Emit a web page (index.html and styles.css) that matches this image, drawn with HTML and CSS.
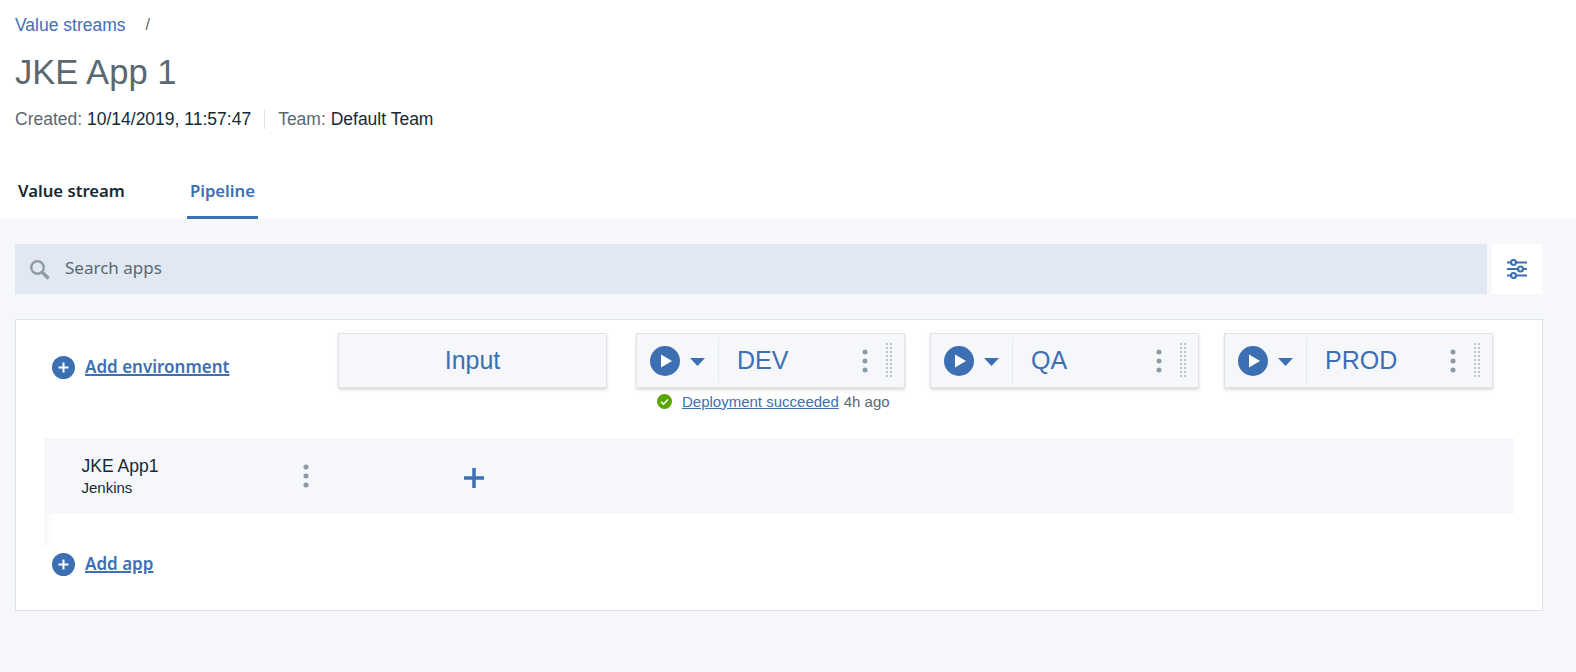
FILE: index.html
```html
<!DOCTYPE html>
<html lang="en">
<head>
<meta charset="utf-8">
<title>JKE App 1</title>
<link rel="stylesheet" href="styles.css">
</head>
<body>
<header class="head">
  <nav class="crumbs"><a class="crumb-link">Value streams</a><span class="crumb-sep">/</span></nav>
  <h1 class="title">JKE App 1</h1>
  <div class="meta">
    <span class="meta-item">Created: <span class="meta-val">10/14/2019, 11:57:47</span></span>
    <span class="meta-div"></span>
    <span class="meta-item">Team: <span class="meta-val">Default Team</span></span>
  </div>
  <div class="tabs">
    <div class="tab">Value stream</div>
    <div class="tab tab-active">Pipeline</div>
  </div>
</header>
<main class="body">
  <div class="toolbar">
    <div class="search">
      <svg class="search-icon" width="20" height="20" viewBox="0 0 20 20"><circle cx="7.500" cy="7.500" r="6.300" fill="none" stroke="#8c9ba5" stroke-width="2.400"/><path d="M12.500 12.500l6 6" stroke="#8c9ba5" stroke-width="3.600" fill="none"/></svg>
      <span class="search-text">Search apps</span>
    </div>
    <button class="filter">
      <svg width="20" height="20" viewBox="0 0 20 20"><g fill="none" stroke="#3d70b2" stroke-width="2.200"><path d="M0 3.500h20M0 10h20M0 16.500h20"/><circle cx="6.500" cy="3.500" r="2.500" fill="#fff"/><circle cx="13.500" cy="10" r="2.500" fill="#fff"/><circle cx="6.500" cy="16.500" r="2.500" fill="#fff"/></g></svg>
    </button>
  </div>
  <section class="panel">
    <div class="env-row">
      <a class="add add-env">
        <svg class="add-icon" width="23" height="23" viewBox="0 0 23 23"><circle cx="11.500" cy="11.500" r="11.500" fill="#3d70b2"/><path d="M11.500 6.500v10M6.500 11.500h10" stroke="#fff" stroke-width="2"/></svg>
        <span class="add-label">Add environment</span>
      </a>
      <div class="card card-input">Input</div>
      <div class="env env-dev">
        <div class="card">
          <div class="run">
            <svg width="30" height="30" viewBox="0 0 30 30"><circle cx="15" cy="15" r="15" fill="#3d70b2"/><path d="M11 8.500l11 6.500-11 6.500z" fill="#fff"/></svg>
            <svg class="caret" width="15" height="8" viewBox="0 0 15 8"><path d="M0 0h15l-7.500 8z" fill="#3d70b2"/></svg>
          </div>
          <span class="env-name">DEV</span>
          <svg class="kebab" width="6" height="24" viewBox="0 0 6 24"><g fill="#8c9ba5"><circle cx="3" cy="3" r="2.500"/><circle cx="3" cy="12" r="2.500"/><circle cx="3" cy="21" r="2.500"/></g></svg>
          <span class="grip"></span>
        </div>
        <div class="status">
          <svg width="15" height="15" viewBox="0 0 15 15"><circle cx="7.500" cy="7.500" r="7.500" fill="#5aa700"/><path d="M4 7.800l2.500 2.400L11 5.500" fill="none" stroke="#fff" stroke-width="1.500"/></svg>
          <a class="status-link">Deployment succeeded</a>
          <span class="status-time">4h ago</span>
        </div>
      </div>
      <div class="env">
        <div class="card">
          <div class="run">
            <svg width="30" height="30" viewBox="0 0 30 30"><circle cx="15" cy="15" r="15" fill="#3d70b2"/><path d="M11 8.500l11 6.500-11 6.500z" fill="#fff"/></svg>
            <svg class="caret" width="15" height="8" viewBox="0 0 15 8"><path d="M0 0h15l-7.500 8z" fill="#3d70b2"/></svg>
          </div>
          <span class="env-name">QA</span>
          <svg class="kebab" width="6" height="24" viewBox="0 0 6 24"><g fill="#8c9ba5"><circle cx="3" cy="3" r="2.500"/><circle cx="3" cy="12" r="2.500"/><circle cx="3" cy="21" r="2.500"/></g></svg>
          <span class="grip"></span>
        </div>
      </div>
      <div class="env">
        <div class="card">
          <div class="run">
            <svg width="30" height="30" viewBox="0 0 30 30"><circle cx="15" cy="15" r="15" fill="#3d70b2"/><path d="M11 8.500l11 6.500-11 6.500z" fill="#fff"/></svg>
            <svg class="caret" width="15" height="8" viewBox="0 0 15 8"><path d="M0 0h15l-7.500 8z" fill="#3d70b2"/></svg>
          </div>
          <span class="env-name">PROD</span>
          <svg class="kebab" width="6" height="24" viewBox="0 0 6 24"><g fill="#8c9ba5"><circle cx="3" cy="3" r="2.500"/><circle cx="3" cy="12" r="2.500"/><circle cx="3" cy="21" r="2.500"/></g></svg>
          <span class="grip"></span>
        </div>
      </div>
    </div>
    <div class="app-row">
      <div class="app-info">
        <div class="app-name">JKE App1</div>
        <div class="app-source">Jenkins</div>
      </div>
      <svg class="app-kebab" width="6" height="24" viewBox="0 0 6 24"><g fill="#8c9ba5"><circle cx="3" cy="3" r="2.500"/><circle cx="3" cy="12" r="2.500"/><circle cx="3" cy="21" r="2.500"/></g></svg>
      <svg class="app-plus" width="20" height="20" viewBox="0 0 20 20"><path d="M10 0v20M0 10h20" stroke="#3d70b2" stroke-width="3.500"/></svg>
    </div>
    <div class="app-fade"></div>
    <a class="add add-app">
      <svg class="add-icon" width="23" height="23" viewBox="0 0 23 23"><circle cx="11.500" cy="11.500" r="11.500" fill="#3d70b2"/><path d="M11.500 6.500v10M6.500 11.500h10" stroke="#fff" stroke-width="2"/></svg>
      <span class="add-label">Add app</span>
    </a>
  </section>
</main>
</body>
</html>
```
FILE: styles.css
```css
* { box-sizing: border-box; }
html, body { margin: 0; padding: 0; }
body {
  height: 672px;
  overflow: hidden;
  background: #f5f7fb;
  font-family: "Liberation Sans", Arial, sans-serif;
  color: #152935;
}
.head { background: #fff; height: 219px; padding: 15px 15px 0; }
.crumbs { display: flex; height: 20px; line-height: 20px; font-size: 17.500px; }
.crumb-link { color: #3d70b2; }
.crumb-sep { color: #5a6872; margin-left: 20px; font-size: 16px; }
.title { margin: 16px 0 0; font-size: 34.600px; line-height: 42px; font-weight: 400; color: #5a6872; }
.meta { display: flex; align-items: center; margin-top: 16px; height: 20px; font-size: 17.500px; color: #5a6872; }
.meta-val { color: #152935; }
.meta-div { width: 1px; height: 20px; background: #dfe3e6; margin: 0 13px; }
.tabs { display: flex; margin-top: 39px; height: 51px; }
.tab {
  font-family: "Noto Sans", sans-serif;
  font-weight: 600;
  font-size: 16.700px;
  line-height: 22px;
  padding: 12px 3px 0;
  color: #152935;
  margin-right: 59px;
}
.tab-active { color: #3d70b2; border-bottom: 3px solid #3d70b2; height: 51px; margin-right: 0; }
.body { padding: 25px 34px 0 15px; }
.toolbar { display: flex; gap: 5px; height: 50px; }
.search { flex: 1; background: #e1e8f2; display: flex; align-items: center; padding-left: 15px; }
.search-text { margin-left: 15px; font-size: 17px; line-height: 22px; margin-top: -3px; color: #5a6872; font-family: "Noto Sans", sans-serif; }
.search-icon { margin-top: 2px; }
.filter { width: 50px; height: 50px; border: 0; padding: 0; background: #fff; display: flex; align-items: center; justify-content: center; }
.panel { margin: 25px -1px 0 0; height: 292px; background: #fff; border: 1px solid #dfe3e6; position: relative; padding: 13px 0 0 28px; }
.env-row { display: flex; align-items: flex-start; height: 105px; }
.add { display: flex; align-items: center; color: #3d70b2; }
.add-icon { flex: none; }
.add-label {
  margin: -2px 0 0 10px;
  font-family: "Noto Sans", sans-serif;
  font-weight: 600;
  font-size: 17px;
  line-height: 23px;
  text-decoration: underline;
  text-decoration-thickness: 2px;
}
.add-env { width: 286px; margin: 23px 0 0 8px; }
.card {
  width: 269px;
  height: 55px;
  background: #f5f7fb;
  border: 1px solid #dfe3e6;
  box-shadow: 0 2px 3px rgba(0, 0, 0, .14);
  display: flex;
  align-items: center;
  position: relative;
  color: #3d70b2;
  font-size: 25px;
}
.card-input { justify-content: center; margin-right: 29px; }
.env { margin-right: 25px; }
.run { display: flex; align-items: center; height: 45px; width: 82px; padding-left: 13px; border-right: 1px solid #e6e9ee; flex: none; }
.caret { margin: 2px 0 0 10px; }
.env-name { margin-left: 18px; flex: 1; }
.kebab { margin-right: 16px; }
.grip {
  width: 8px;
  height: 36px;
  margin-right: 12px;
  background: conic-gradient(#bcc4ca 25%, transparent 0) 0 0 / 4px 4px;
}
.status { display: flex; align-items: center; margin: 5px 0 0 21px; height: 16px; font-size: 15px; color: #5a6872; }
.status-link { color: #3d70b2; text-decoration: underline; margin-left: 10px; }
.status-time { margin-left: 5px; }
.app-row { display: flex; align-items: flex-start; height: 76px; width: 1470px; background: #f5f7fb; position: relative; }
.app-info { width: 259px; padding: 18px 0 0 37.500px; flex: none; }
.app-name { font-size: 17.500px; line-height: 20px; }
.app-source { font-size: 15px; line-height: 18px; margin-top: 3px; }
.app-kebab { margin-top: 26px; flex: none; }
.app-plus { margin: 30px 0 0 155px; flex: none; }
.app-fade { width: 12px; height: 32px; background: linear-gradient(90deg, #f8f9fc, #fff); }
.add-app { margin: 7px 0 0 8px; }
```
